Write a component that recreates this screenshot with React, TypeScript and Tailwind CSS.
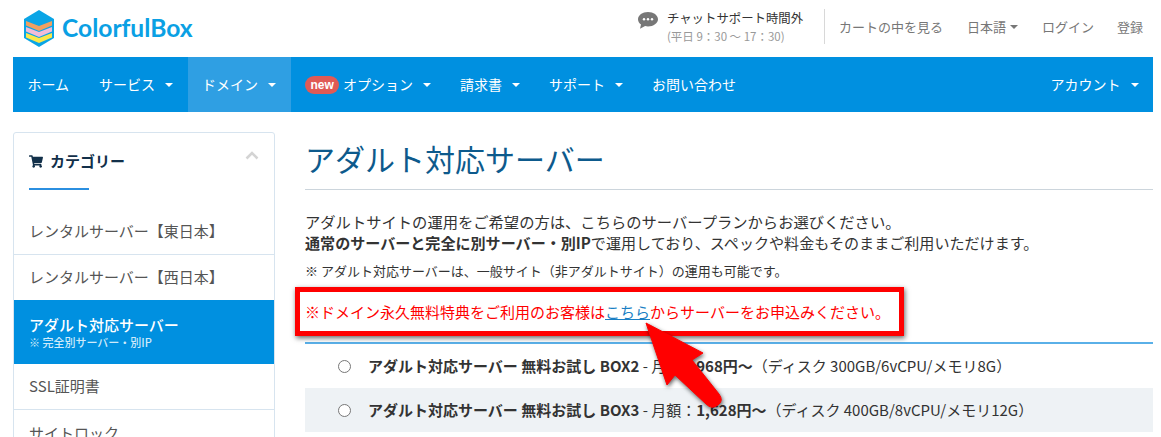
import React from "react";

const font = { fontFamily: '"Noto Sans CJK JP", "Noto Sans", sans-serif' };

function Caret() {
  return <span className="ml-[10px] inline-block h-0 w-0 border-x-[4px] border-t-[4px] border-x-transparent border-t-white align-middle" />;
}

function Logo() {
  return (
    <svg width="32" height="37" viewBox="0 0 32 37" className="shrink-0">
      <polygon points="16,0 31,9 31,28 16,37 1,28 1,9" fill="#0aa5e6" />
      <polygon points="3,11 16,16 29,11 29,15.500 16,21 3,15.500" fill="#f0a060" />
      <polygon points="3,17 16,22 29,17 29,21.500 16,27 3,21.500" fill="#f2bcd8" />
      <polygon points="3,23 16,28 29,23 29,27.500 16,33 3,27.500" fill="#fbe84a" />
    </svg>
  );
}

function NavItem({ children, caret, active }: { children: React.ReactNode; caret?: boolean; active?: boolean }) {
  return (
    <div className={`flex h-full items-center px-[14.5px] text-[14px] text-white ${active ? "bg-[#2f9fe3]" : ""}`}>
      {children}
      {caret && <Caret />}
    </div>
  );
}

function SideItem({ children, last }: { children: React.ReactNode; last?: boolean }) {
  return (
    <div className={`flex h-[46px] items-center px-[15px] text-[15px] text-[#555] ${last ? "" : "border-b border-[#d7e4ef]"}`}>
      {children}
    </div>
  );
}

function Row({ shaded, name, price, spec }: { shaded?: boolean; name: string; price: string; spec: string }) {
  return (
    <div className={`flex h-[44px] items-center pl-[33px] text-[15px] whitespace-nowrap text-[#333] ${shaded ? "bg-[#eef2f5]" : ""}`}>
      <span className="mr-[17px] h-[13px] w-[13px] shrink-0 rounded-full border border-[#777] bg-white" />
      <span className="font-bold">{name}</span>
      <span>&nbsp;- 月額：</span>
      <span className="font-bold">{price}</span>
      <span>{spec}</span>
    </div>
  );
}

export default function App() {
  return (
    <div className="relative h-[437px] w-[1161px] overflow-hidden bg-white" style={font}>
      <header className="flex h-[57px] items-center pl-[23px] pr-[18px]">
        <div className="flex items-center gap-[7px] pb-[1px]">
          <Logo />
          <span className="text-[24.6px] text-[#0aa0e4]" style={{ fontFamily: '"Lato", sans-serif', fontWeight: 700 }}>ColorfulBox</span>
        </div>
        <div className="ml-auto flex items-center pb-[4px] text-[13px] text-[#777]">
          <svg width="20" height="17" viewBox="0 0 20 17" className="mb-[13px] mr-[9px]">
            <path d="M10 0c5.500 0 10 3.200 10 7.200s-4.500 7.200-10 7.200c-1 0-2-.1-2.900-.3L2 16.800l1-4.200C1.200 11.300 0 9.400 0 7.200 0 3.200 4.500 0 10 0z" fill="#777" />
            <circle cx="6" cy="7.200" r="1.200" fill="#fff" /><circle cx="10" cy="7.200" r="1.200" fill="#fff" /><circle cx="14" cy="7.200" r="1.200" fill="#fff" />
          </svg>
          <div className="h-[35px] w-[158px] border-r border-[#d8d8d8]">
            <div className="text-[12.4px] leading-[19px] text-[#333]">チャットサポート時間外</div>
            <div className="text-[11.5px] leading-[17px] text-[#999]">(平日 9：30 ～ 17：30)</div>
          </div>
          <span className="ml-[14px]">カートの中を見る</span>
          <span className="ml-[24px] flex items-center">日本語<span className="ml-[4px] h-0 w-0 border-x-[4px] border-t-[4px] border-x-transparent border-t-[#777]" /></span>
          <span className="ml-[24px]">ログイン</span>
          <span className="ml-[23px]">登録</span>
        </div>
      </header>

      <nav className="ml-[13px] flex h-[55px] w-[1140px] items-center bg-[#0090e0]">
        <NavItem><span className="mr-[1px]">ホーム</span></NavItem>
        <NavItem caret>サービス</NavItem>
        <NavItem caret active>ドメイン</NavItem>
        <NavItem caret>
          <span className="mr-[4px] w-[34px] rounded-full bg-[#e05a55] text-center text-[12px] font-bold leading-[18px]" style={{ fontFamily: '"Liberation Sans", sans-serif' }}>new</span>オプション
        </NavItem>
        <NavItem caret>請求書</NavItem>
        <NavItem caret>サポート</NavItem>
        <NavItem>お問い合わせ</NavItem>
        <div className="ml-auto h-full"><NavItem caret>アカウント</NavItem></div>
      </nav>

      <div className="ml-[13px] mt-[20px] flex w-[1140px] gap-[30px]">
        <aside className="h-[400px] w-[262px] shrink-0 rounded-[3px] border border-[#d7e4ef]">
          <div className="relative h-[76px] px-[15px] pt-[17px]">
            <div className="flex items-center text-[15px] font-bold text-[#12304a]">
              <svg width="14" height="13" viewBox="0 0 576 512" className="mr-[7px]"><path fill="#12304a" d="M528 301.300l47.300-208C578.700 78.300 567.300 64 552 64H159.200l-9.200-44.800C147.800 8 137.900 0 126.500 0H24C10.700 0 0 10.700 0 24v16c0 13.300 10.700 24 24 24h69.900l70.200 343.400C147.300 417.100 136 435.200 136 456c0 30.900 25.100 56 56 56s56-25.100 56-56c0-15.700-6.400-29.800-16.800-40h209.600C430.400 426.200 424 440.300 424 456c0 30.900 25.100 56 56 56s56-25.100 56-56c0-22.200-12.900-41.300-31.600-50.400l5.500-24.300c3.400-15-8-29.300-23.400-29.300H218.100l-6.500-32h293c11.200 0 20.900-7.800 23.400-18.700z" /></svg>
              カテゴリー
            </div>
            <div className="mt-[15px] h-[2px] w-[60px] bg-[#2b8fe0]" />
            <svg width="14" height="9" viewBox="0 0 14 9" className="absolute right-[15px] top-[18px]"><path d="M1.500 7.500 7 2l5.500 5.500" fill="none" stroke="#d4d4d4" strokeWidth="2.500" /></svg>
          </div>
          <SideItem>レンタルサーバー【東日本】</SideItem>
          <div className="flex h-[45px] items-center px-[15px] text-[15px] text-[#555]">レンタルサーバー【西日本】</div>
          <div className="flex h-[64px] flex-col justify-center bg-[#0090e0] px-[15px] text-white">
            <div className="text-[15px] font-medium leading-[21px]">アダルト対応サーバー</div>
            <div className="text-[11px] font-medium leading-[15px] text-[#cfeafa]">※ 完全別サーバー・別IP</div>
          </div>
          <SideItem>SSL証明書</SideItem>
          <SideItem last>サイトロック</SideItem>
        </aside>

        <main className="min-w-0 flex-1">
          <h1 className="h-[58px] border-b border-[#ccd5dc] pt-[2px] text-[30px] font-normal leading-[48px] text-[#0d5a8c]">アダルト対応サーバー</h1>
          <div className="mt-[21px] leading-[21px] whitespace-nowrap text-[#333]">
            <p className="text-[15.3px] leading-[21px]">アダルトサイトの運用をご希望の方は、こちらのサーバープランからお選びください。</p>
            <p className="text-[15.07px] leading-[21px]"><b>通常のサーバーと完全に別サーバー・別IP</b>で運用しており、スペックや料金もそのままご利用いただけます。</p>
          </div>
          <p className="mt-[9px] text-[13px] leading-[18px] text-[#333]">※ アダルト対応サーバーは、一般サイト（非アダルトサイト）の運用も可能です。</p>
          <p className="mt-[21px] text-[15px] leading-[22px] text-[#f00]">
            ※ドメイン永久無料特典をご利用のお客様は<span className="text-[#1a7fc4] underline">こちら</span>からサーバーをお申込みください。
          </p>
          <div className="mt-[19px] border-t-2 border-[#5ab0e8]">
            <Row name="アダルト対応サーバー 無料お試し BOX2" price="968円〜" spec="（ディスク 300GB/6vCPU/メモリ8G）" />
            <Row shaded name="アダルト対応サーバー 無料お試し BOX3" price="1,628円〜" spec="（ディスク 400GB/8vCPU/メモリ12G）" />
          </div>
        </main>
      </div>

      <div className="absolute left-[295px] top-[287px] h-[49px] w-[609px] border-[5px] border-[#f00] shadow-[1px_2px_5px_rgba(0,0,0,0.6)]" />
      <svg width="110" height="110" viewBox="0 0 110 110" className="absolute left-[640px] top-[320px]">
        <path d="M6 3 L63 33 L52 40 L79 74 Q84 81 78 85 Q72 90 66 84 L35 55 L27 65 Z" fill="#f00" stroke="#f00" strokeWidth="1" strokeLinejoin="round" style={{ filter: "drop-shadow(1px 2px 2px rgba(0,0,0,.6))" }} />
      </svg>
    </div>
  );
}
